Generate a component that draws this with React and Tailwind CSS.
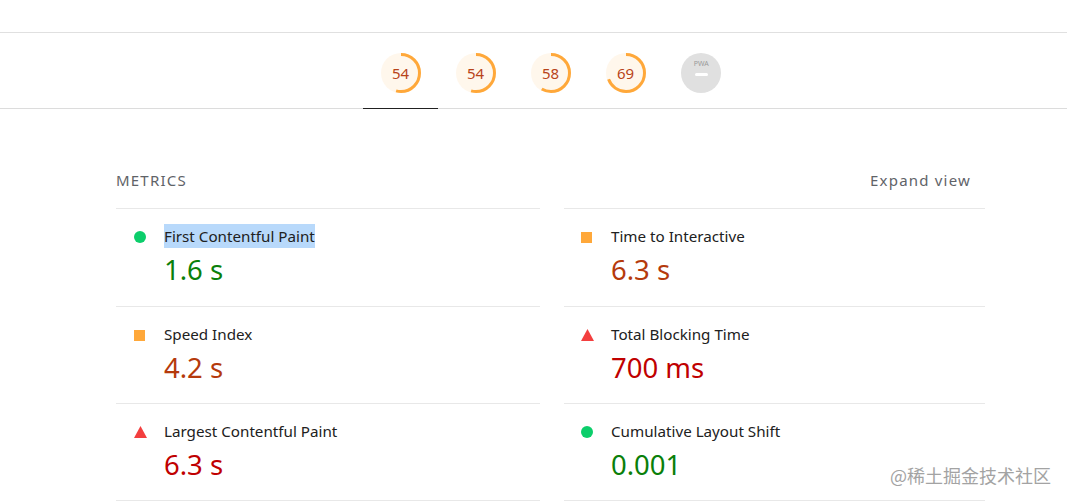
const GAUGES = [54, 54, 58, 69]

const METRICS = [
  [
    { label: 'First Contentful Paint', value: '1.6 s', kind: 'pass', selected: true },
    { label: 'Speed Index', value: '4.2 s', kind: 'average' },
    { label: 'Largest Contentful Paint', value: '6.3 s', kind: 'fail' },
  ],
  [
    { label: 'Time to Interactive', value: '6.3 s', kind: 'average' },
    { label: 'Total Blocking Time', value: '700 ms', kind: 'fail' },
    { label: 'Cumulative Layout Shift', value: '0.001', kind: 'pass' },
  ],
]

const VALUE_COLORS = {
  pass: 'text-[#0a7f0a]',
  average: 'text-[#b53a0c]',
  fail: 'text-[#c00000]',
}

function Gauge({ score }) {
  const r = 18.5
  const circ = 2 * Math.PI * r
  return (
    <svg width="40" height="40" viewBox="0 0 40 40">
      <circle cx="20" cy="20" r="20" fill="#fff7ec" />
      <circle
        cx="20"
        cy="20"
        r={r}
        fill="none"
        stroke="#ffa83a"
        strokeWidth="3"
        strokeDasharray={`${(circ * score) / 100} ${circ}`}
        transform="rotate(-90 20 20)"
      />
      <text x="19.5" y="25.5" textAnchor="middle" fontSize="15" fill="#b8441a">
        {score}
      </text>
    </svg>
  )
}

function PwaBadge() {
  return (
    <div className="flex h-10 w-10 flex-col items-center rounded-full bg-[#e0e0e0] pt-[7px]">
      <span className="text-[7px] leading-[8px] text-[#9a9a9a]">PWA</span>
      <span className="mt-[5px] h-[3px] w-[13px] rounded-full bg-white" />
    </div>
  )
}

function Marker({ kind }) {
  if (kind === 'pass') return <span className="h-3 w-3 rounded-full bg-[#0cce6b]" />
  if (kind === 'average') return <span className="h-[11px] w-[11px] bg-[#ffa83a]" />
  return (
    <svg className="shrink-0" width="13" height="12" viewBox="0 0 13 12">
      <polygon points="6.5,0 13,12 0,12" fill="#f33f3f" />
    </svg>
  )
}

function MetricRow({ metric, first, markerClass, textClass }) {
  return (
    <div className={`flex border-b border-[#e8e8e8] ${first ? 'h-[98px]' : 'h-[97px]'}`}>
      <div className={`mt-[22px] flex h-3 items-center justify-start ${markerClass}`}>
        <Marker kind={metric.kind} />
      </div>
      <div className={`${textClass} pt-[15px]`}>
        <div className="h-6 text-[15.2px] leading-6 text-[#212121]">
          <span className={`inline-block h-6 ${metric.selected ? 'bg-[#b8d9fb]' : ''}`}>{metric.label}</span>
        </div>
        <div className={`mt-1 text-[27.5px] leading-9 ${VALUE_COLORS[metric.kind]}`}>{metric.value}</div>
      </div>
    </div>
  )
}

export default function App() {
  return (
    <div className="relative h-[502px] w-[1067px] overflow-hidden bg-white font-['Noto_Sans','Open_Sans',sans-serif]">
      <div className="h-[33px] border-b border-[#e0e0e0]" />

      <div className="flex h-[76px] border-b border-[#dcdcdc] pl-[363px]">
        {GAUGES.map((score, i) => (
          <div
            key={i}
            className={`flex h-[76px] w-[75.2px] items-center justify-center pt-1 ${
              i === 0 ? 'border-b border-[#212121]' : ''
            }`}
          >
            <Gauge score={score} />
          </div>
        ))}
        <div className="flex h-[76px] w-[75.2px] items-center justify-center pt-1">
          <PwaBadge />
        </div>
      </div>

      <div className="flex pt-[61px] pl-[116px]">
        <div className="w-[424px]">
          <div className="flex h-[39px] items-start border-b border-[#e8e8e8]">
            <span className="text-[15px] leading-5 tracking-[1.2px] text-[#5f6368]">METRICS</span>
          </div>
          {METRICS[0].map((m, i) => (
            <MetricRow key={m.label} metric={m} first={i === 0} markerClass="ml-[18px] w-3" textClass="ml-[18px]" />
          ))}
        </div>
        <div className="ml-6 w-[421px]">
          <div className="flex h-[39px] items-start justify-end border-b border-[#e8e8e8] pr-[14px]">
            <span className="text-[15px] leading-5 tracking-[1.2px] text-[#5f6368]">Expand view</span>
          </div>
          {METRICS[1].map((m, i) => (
            <MetricRow key={m.label} metric={m} first={i === 0} markerClass="ml-[17px] w-3" textClass="ml-[18px]" />
          ))}
        </div>
      </div>

      {/* watermark sits over the page */}
      <div className="absolute top-[462px] left-[890px] font-['Noto_Sans_CJK_SC',sans-serif] text-[18px] leading-[26px] text-[#a3a3a3]">
        @稀土掘金技术社区
      </div>
    </div>
  )
}
